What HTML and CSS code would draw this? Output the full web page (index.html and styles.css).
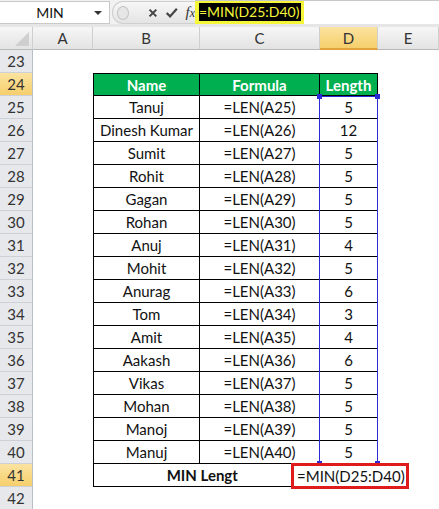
FILE: index.html
```html
<!DOCTYPE html>
<html lang="en">
<head>
    <meta charset="UTF-8">
    <title>MIN formula</title>
    <link rel="stylesheet" href="styles.css">
</head>
<body>
    <div class="fbar">
        <div class="namebox">
            <span class="name">MIN</span>
            <span class="dd"></span>
        </div>
        <div class="fbtns">
            <span class="grip"></span>
            <svg class="ico" width="14" height="14" viewBox="0 0 14 14">
                <path d="M3 3 L11 11 M11 3 L3 11" stroke="#444" stroke-width="2.4" fill="none"/>
            </svg>
            <svg class="ico" width="16" height="14" viewBox="0 0 16 14">
                <path d="M2 7 L6 11 L14 2" stroke="#444" stroke-width="2.6" fill="none"/>
            </svg>
            <span class="fx">f<i>x</i></span>
        </div>
        <div class="finput">
            <span class="fhl"><span class="fsel">=MIN(D25:D40)</span></span>
        </div>
    </div>

    <div class="sheet">
        <div class="ch corner"><span class="tri"></span></div>
        <div class="ch">A</div>
        <div class="ch">B</div>
        <div class="ch">C</div>
        <div class="ch on">D</div>
        <div class="ch">E</div>

        <div class="rh">23</div><div class="c"></div><div class="c"></div><div class="c"></div><div class="c"></div><div class="c"></div>

        <div class="rh on">24</div><div class="c"></div>
        <div class="c t th first">Name</div><div class="c t th">Formula</div><div class="c t th">Length</div><div class="c"></div>

        <div class="rh">25</div><div class="c"></div><div class="c t first">Tanuj</div><div class="c t">=LEN(A25)</div><div class="c t">5</div><div class="c"></div>
        <div class="rh">26</div><div class="c"></div><div class="c t first">Dinesh Kumar</div><div class="c t">=LEN(A26)</div><div class="c t">12</div><div class="c"></div>
        <div class="rh">27</div><div class="c"></div><div class="c t first">Sumit</div><div class="c t">=LEN(A27)</div><div class="c t">5</div><div class="c"></div>
        <div class="rh">28</div><div class="c"></div><div class="c t first">Rohit</div><div class="c t">=LEN(A28)</div><div class="c t">5</div><div class="c"></div>
        <div class="rh">29</div><div class="c"></div><div class="c t first">Gagan</div><div class="c t">=LEN(A29)</div><div class="c t">5</div><div class="c"></div>
        <div class="rh">30</div><div class="c"></div><div class="c t first">Rohan</div><div class="c t">=LEN(A30)</div><div class="c t">5</div><div class="c"></div>
        <div class="rh">31</div><div class="c"></div><div class="c t first">Anuj</div><div class="c t">=LEN(A31)</div><div class="c t">4</div><div class="c"></div>
        <div class="rh">32</div><div class="c"></div><div class="c t first">Mohit</div><div class="c t">=LEN(A32)</div><div class="c t">5</div><div class="c"></div>
        <div class="rh">33</div><div class="c"></div><div class="c t first">Anurag</div><div class="c t">=LEN(A33)</div><div class="c t">6</div><div class="c"></div>
        <div class="rh">34</div><div class="c"></div><div class="c t first">Tom</div><div class="c t">=LEN(A34)</div><div class="c t">3</div><div class="c"></div>
        <div class="rh">35</div><div class="c"></div><div class="c t first">Amit</div><div class="c t">=LEN(A35)</div><div class="c t">4</div><div class="c"></div>
        <div class="rh">36</div><div class="c"></div><div class="c t first">Aakash</div><div class="c t">=LEN(A36)</div><div class="c t">6</div><div class="c"></div>
        <div class="rh">37</div><div class="c"></div><div class="c t first">Vikas</div><div class="c t">=LEN(A37)</div><div class="c t">5</div><div class="c"></div>
        <div class="rh">38</div><div class="c"></div><div class="c t first">Mohan</div><div class="c t">=LEN(A38)</div><div class="c t">5</div><div class="c"></div>
        <div class="rh">39</div><div class="c"></div><div class="c t first">Manoj</div><div class="c t">=LEN(A39)</div><div class="c t">5</div><div class="c"></div>
        <div class="rh">40</div><div class="c"></div><div class="c t first">Manuj</div><div class="c t">=LEN(A40)</div><div class="c t">5</div><div class="c"></div>

        <div class="rh on">41</div><div class="c"></div>
        <div class="c t first merged"><b>MIN Length</b></div><div class="c"></div><div class="c"></div>

        <div class="rh">42</div><div class="c"></div><div class="c"></div><div class="c"></div><div class="c"></div><div class="c"></div>

        <!-- range highlight + in-cell editor -->
        <div class="range">
            <span class="hdl tl"></span><span class="hdl tr"></span>
            <span class="hdl bl"></span><span class="hdl br"></span>
        </div>
        <div class="mask"></div>
        <div class="editor">=MIN(D25:D40)</div>
    </div>
</body>
</html>
```

FILE: styles.css
```css
body {
    margin: 0;
    background: white;
    font-family: Lato, "Liberation Sans", sans-serif;
    color: #111;
    overflow: hidden;
}

/* formula bar */
.fbar {
    display: flex;
    height: 24px;
    background: #f1f1f1;
    border-bottom: 3px solid #e6e6e6;
}
.namebox {
    width: 110px;
    display: flex;
    align-items: center;
    background: white;
    border-top: 1px solid #c9c9c9;
    border-bottom: 1px solid #c9c9c9;
    border-right: 1px solid #c9c9c9;
    margin-top: 1px;
    box-sizing: border-box;
    height: 23px;
}
.name {
    flex: 1;
    text-align: center;
    font-size: 14px;
    padding-left: 6px;
}
.dd {
    width: 0;
    height: 0;
    border-left: 4px solid transparent;
    border-right: 4px solid transparent;
    border-top: 4px solid #333;
    margin-right: 7px;
}
.fbtns {
    width: 83px;
    display: flex;
    align-items: center;
    gap: 6px;
    background: linear-gradient(#f7f7f7, #e4e4e4);
    border-radius: 11px 0 0 11px;
    margin-left: 2px;
    height: 23px;
    margin-top: 1px;
    box-sizing: border-box;
    border: 1px solid #cfcfcf;
    border-right: none;
}
.grip {
    width: 12px;
    height: 12px;
    border-radius: 50%;
    background: #e6e6e6;
    border: 1px solid #c4c4c4;
    margin-left: 4px;
    margin-right: 12px;
}
.ico {
    display: block;
}
.fx {
    font-family: "Liberation Serif", serif;
    font-style: italic;
    font-size: 15px;
    color: #333;
    margin-left: 1px;
}
.fx i {
    font-size: 12px;
}
.finput {
    flex: 1;
    background: white;
    display: flex;
    align-items: stretch;
    border-top: 1px solid #c9c9c9;
}
.fhl {
    background: #f5f53a;
    padding: 2px 3px 3px 4px;
    display: flex;
    align-items: center;
}
.fsel {
    background: #000;
    color: #f5f53a;
    font-size: 14px;
    line-height: 18px;
    padding-right: 2px;
}

/* sheet grid */
.sheet {
    position: relative;
    display: grid;
    grid-template-columns: 33px 60px 107px 120px 58px 61px;
    grid-auto-rows: 23px;
}
.ch {
    background: linear-gradient(#f6f6f6, #e3e3e3);
    border-right: 1px solid #cfcfcf;
    border-bottom: 1px solid #b9b9b9;
    display: flex;
    align-items: center;
    justify-content: center;
    font-size: 15px;
    color: #333;
    box-sizing: border-box;
}
.ch.on {
    background: linear-gradient(#fbe3a0, #f6cf6c);
    border-bottom: 2px solid #e2a33a;
}
.corner {
    position: relative;
}
.tri {
    position: absolute;
    right: 3px;
    bottom: 3px;
    width: 0;
    height: 0;
    border-left: 14px solid transparent;
    border-bottom: 14px solid #cfcfcf;
}
.rh {
    background: #e6e8ec;
    border-right: 1px solid #b9bfc9;
    border-bottom: 1px solid #cdd1d7;
    display: flex;
    align-items: center;
    justify-content: center;
    font-size: 15px;
    color: #333;
    box-sizing: border-box;
}
.rh.on {
    background: linear-gradient(#fbe3a0, #f6cf6c);
}
.c {
    box-sizing: border-box;
}
.t {
    border-right: 1px solid #000;
    border-bottom: 1px solid #000;
    display: flex;
    align-items: center;
    justify-content: center;
    font-size: 15px;
    white-space: nowrap;
    overflow: hidden;
}
.first {
    border-left: 1px solid #000;
}
.th {
    background: #00b050;
    color: white;
    font-weight: bold;
    border-top: 1px solid #000;
}
.merged {
    grid-column: span 2;
}

/* overlays: reference range and editing cell */
.range {
    position: absolute;
    left: 319px;
    top: 69px;
    width: 59px;
    height: 368px;
    border: 1px solid #2b2bd6;
    box-sizing: border-box;
}
.hdl {
    position: absolute;
    width: 5px;
    height: 5px;
    background: #2b2bd6;
}
.tl { left: -3px; top: -3px; }
.tr { right: -3px; top: -3px; }
.bl { left: -3px; bottom: -3px; }
.br { right: -3px; bottom: -3px; }
.mask {
    position: absolute;
    left: 238px;
    top: 437px;
    width: 54px;
    height: 22px;
    background: white;
}
.editor {
    position: absolute;
    left: 291px;
    top: 436px;
    width: 118px;
    height: 26px;
    border: 3px solid #e01b1b;
    box-sizing: border-box;
    background: white;
    font-size: 15px;
    display: flex;
    align-items: center;
    padding-left: 3px;
    white-space: nowrap;
}
```
